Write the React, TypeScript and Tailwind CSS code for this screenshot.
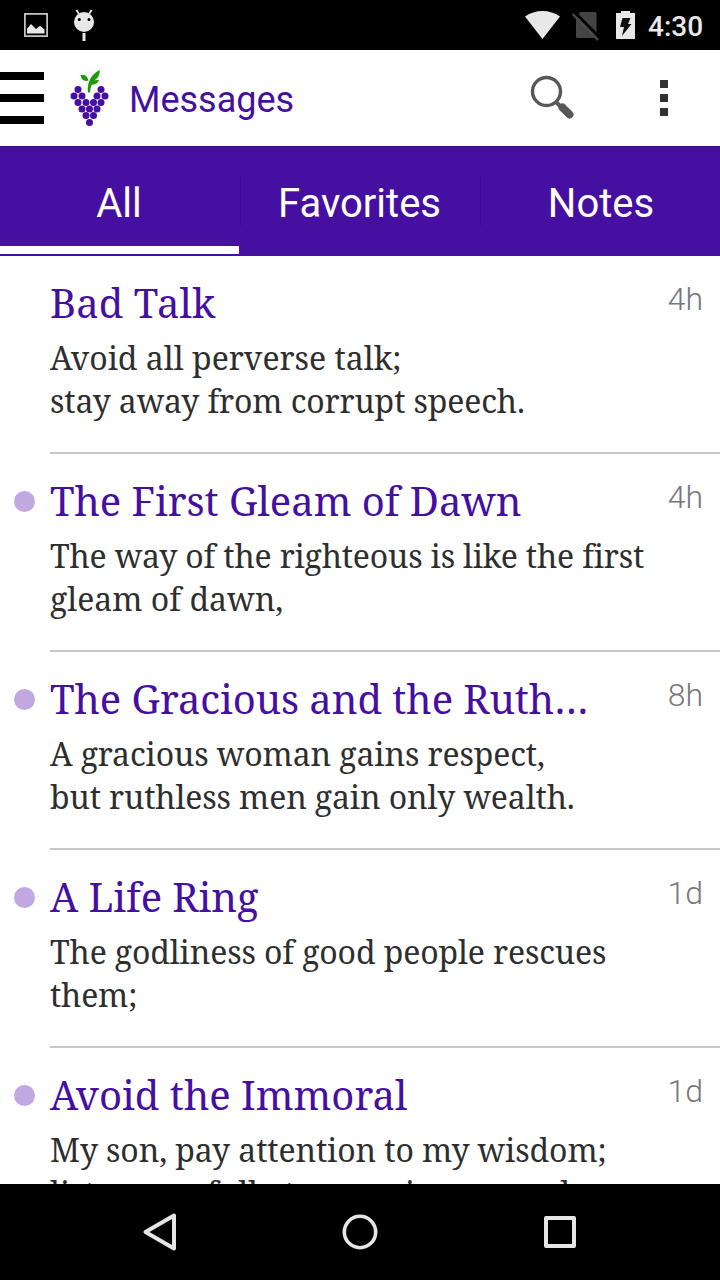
import { clsx } from "clsx";

interface Message {
  title: string;
  titleClass?: string;
  lines: { text: string; className?: string }[];
  age: string;
  unread: boolean;
}

const MESSAGES: Message[] = [
  {
    title: "Bad Talk",
    lines: [
      { text: "Avoid all perverse talk;" },
      { text: "stay away from corrupt speech.", className: "tracking-[-0.14px]" },
    ],
    age: "4h",
    unread: false,
  },
  {
    title: "The First Gleam of Dawn",
    titleClass: "tracking-[-0.05px]",
    lines: [
      { text: "The way of the righteous is like the first", className: "tracking-[-0.18px]" },
      { text: "gleam of dawn," },
    ],
    age: "4h",
    unread: true,
  },
  {
    title: "The Gracious and the Ruth…",
    titleClass: "tracking-[-0.07px]",
    lines: [
      { text: "A gracious woman gains respect,", className: "tracking-[-0.12px]" },
      { text: "but ruthless men gain only wealth.", className: "tracking-[-0.13px]" },
    ],
    age: "8h",
    unread: true,
  },
  {
    title: "A Life Ring",
    titleClass: "tracking-[-0.08px]",
    lines: [
      { text: "The godliness of good people rescues", className: "tracking-[-0.13px]" },
      { text: "them;", className: "tracking-[-0.2px]" },
    ],
    age: "1d",
    unread: true,
  },
  {
    title: "Avoid the Immoral",
    lines: [
      { text: "My son, pay attention to my wisdom;", className: "tracking-[-0.12px]" },
      { text: "listen carefully to my wise counsel.", className: "tracking-[-0.13px]" },
    ],
    age: "1d",
    unread: true,
  },
];

const TABS = [
  { label: "All", className: "pr-[2px]" },
  { label: "Favorites", className: "pr-px" },
  { label: "Notes", className: "pl-[2px]" },
];

// centers of the berries, row by row
const GRAPES = [
  [78, 89.5], [101, 89.5],
  [74, 96], [82, 96], [97, 96], [105, 96],
  [78, 102.5], [86, 102.5], [93.5, 102.5], [101, 102.5],
  [82, 109], [89.5, 109], [97, 109],
  [86, 115.5], [93.5, 115.5],
  [89.5, 122.5],
];

function StatusBar() {
  return (
    <div className="flex h-[50px] items-center bg-black text-[#e8e8e8]">
      <svg className="ml-6 h-6 w-6" viewBox="0 0 24 24" fill="none">
        <rect x="0.900" y="0.900" width="22.200" height="22.200" stroke="#c9cdc8" strokeWidth="1.700" />
        <path d="M3 20.500V15.500q2-1 3-3.500 1-1.500 2 0l4 4 3-2.500q1-.8 2 0l3.500 3v4z" fill="currentColor" />
      </svg>
      <svg className="ml-[25px] h-8 w-[22px]" viewBox="0 0 22 32" fill="none">
        <path d="M6 5L3.300 1M16 5L18.700 1" stroke="currentColor" strokeWidth="1.800" />
        <circle cx="11" cy="13" r="10" fill="currentColor" />
        <circle cx="6.300" cy="10.500" r="1.500" fill="#000" />
        <circle cx="16" cy="10.500" r="1.500" fill="#000" />
        <path d="M11 24v8" stroke="currentColor" strokeWidth="3" />
      </svg>
      <div className="flex-1" />
      <svg className="h-7 w-[35px]" viewBox="0 0 35 28" fill="currentColor">
        <path d="M0 5.500Q8 0 17.500 0T35 5.500L17.500 28z" />
      </svg>
      <svg className="ml-3 h-8 w-[27px]" viewBox="0 0 27 32">
        <path d="M8.500 3H23q1.500 0 1.500 1.500V29H5.500q-1.500 0-1.500-1.500V8z" fill="#444" />
        <path d="M3 3.500L28 29" stroke="#000" strokeWidth="3" />
        <path d="M0.500 5L26 31" stroke="#4c4c4c" strokeWidth="2.200" />
      </svg>
      <svg className="ml-[17px] h-[30px] w-[19px]" viewBox="0 0 19 30">
        <path d="M5 1h9v2h5v26H0V3h5z" fill="currentColor" />
        <path d="M6.500 8h8l-2.500 6H15.500L6 26l2-9H4z" fill="#111" />
      </svg>
      <span className="ml-[13px] w-[72px] pt-[3px] text-[28px] font-medium leading-[47px]">4:30</span>
    </div>
  );
}

function GrapeLogo() {
  return (
    <svg className="ml-6 h-[60px] w-[44px]" viewBox="68 68 44 60">
      <path
        d="M88 92.500C87.200 85 89 80 92.500 75.500Q95 72 99.800 70Q100 76.500 95 80Q91 82.500 90 92.500zM80.500 75Q87 74 88.500 80.500Q82 82.500 80.500 75zM91 84.500Q92 79.500 99 80Q97 85.500 91 84.500z"
        fill="#21990f"
      />
      {GRAPES.map(([cx, cy]) => (
        <circle key={`${cx}-${cy}`} cx={cx} cy={cy} r="3.500" fill="#450fa1" />
      ))}
    </svg>
  );
}

function Header() {
  return (
    <header className="flex h-24 items-center bg-white">
      <div className="flex w-11 flex-col gap-[14px]">
        <span className="h-2 bg-black" />
        <span className="h-2 bg-black" />
        <span className="h-2 bg-black" />
      </div>
      <GrapeLogo />
      <h1 className="ml-[17px] flex-1 pt-1 text-[36px] leading-[48px] text-[#450fa1]">Messages</h1>
      <svg className="h-[46px] w-[46px]" viewBox="0 0 46 46" fill="none">
        <circle cx="16.500" cy="16.500" r="14" stroke="#585858" strokeWidth="3.400" />
        <path d="M26 27l4.500 4.500" stroke="#585858" strokeWidth="4" />
        <path d="M32.500 32.500l7 7" stroke="#585858" strokeWidth="8" strokeLinecap="round" />
      </svg>
      <div className="ml-[84px] mr-[52px] flex w-2 flex-col gap-[6px]">
        <span className="h-2 bg-[#303030]" />
        <span className="h-2 bg-[#303030]" />
        <span className="h-2 bg-[#303030]" />
      </div>
    </header>
  );
}

function Tabs() {
  return (
    <nav className="grid h-[110px] grid-cols-3 border-t border-[#3b0d88] bg-[#450fa1]">
      {TABS.map((tab, i) => (
        <div
          key={tab.label}
          className={clsx("relative flex justify-center text-[40px] leading-[114px] text-white", tab.className)}
        >
          {i > 0 && <span className="absolute left-0 top-[29px] h-[50px] w-px bg-[#3b0b90]" />}
          {tab.label}
          {i === 0 && <span className="absolute left-0 right-px top-[99px] h-2 bg-white" />}
        </div>
      ))}
    </nav>
  );
}

function MessageRow({ message }: { message: Message }) {
  return (
    <li className="flex h-[198px] shrink-0">
      <div className="w-[50px] pl-[14px] pt-[37px]">
        {message.unread && <div className="h-[21px] w-[21px] rounded-full bg-[#c2a8e0]" />}
      </div>
      <div className="flex flex-1 justify-between border-b-2 border-[#c8c8c8] pr-[17px]">
        <div className="whitespace-nowrap pt-5 font-['Noto_Serif','DejaVu_Serif',serif]">
          <h2 className="text-[40px] leading-[54px] text-[#450fa1]">
            <span className={clsx(message.titleClass)}>{message.title}</span>
          </h2>
          <div className="mt-[6px] text-[32px] leading-[43px] text-[#2e2e2e]">
            {message.lines.map((line) => (
              <p key={line.text}>
                <span className={clsx("[font-variant-ligatures:none]", line.className)}>{line.text}</span>
              </p>
            ))}
          </div>
        </div>
        <span className="w-0 pt-6 text-[32px] font-light leading-[38px] text-[#777]">
          <span className="float-right">{message.age}</span>
        </span>
      </div>
    </li>
  );
}

function NavBar() {
  return (
    <footer className="flex h-24 items-center justify-center gap-[160px] bg-black">
      <svg className="h-10 w-10" viewBox="0 0 40 40" fill="none" stroke="#e6e6e6" strokeWidth="4" strokeLinejoin="round">
        <path d="M34 3.500v33L5.500 20z" />
      </svg>
      <svg className="h-10 w-10" viewBox="0 0 40 40" fill="none" stroke="#e6e6e6" strokeWidth="3.600">
        <circle cx="20" cy="20" r="15.700" />
      </svg>
      <svg className="h-10 w-10" viewBox="0 0 40 40" fill="none" stroke="#e6e6e6" strokeWidth="4" strokeLinejoin="round">
        <rect x="6" y="6" width="28" height="28" />
      </svg>
    </footer>
  );
}

export default function App() {
  return (
    <div className="flex h-[1280px] w-[720px] flex-col overflow-hidden bg-white font-[Roboto,sans-serif]">
      <StatusBar />
      <Header />
      <Tabs />
      <ul className="flex h-[928px] flex-col overflow-hidden">
        {MESSAGES.map((message) => (
          <MessageRow key={message.title} message={message} />
        ))}
      </ul>
      <NavBar />
    </div>
  );
}
